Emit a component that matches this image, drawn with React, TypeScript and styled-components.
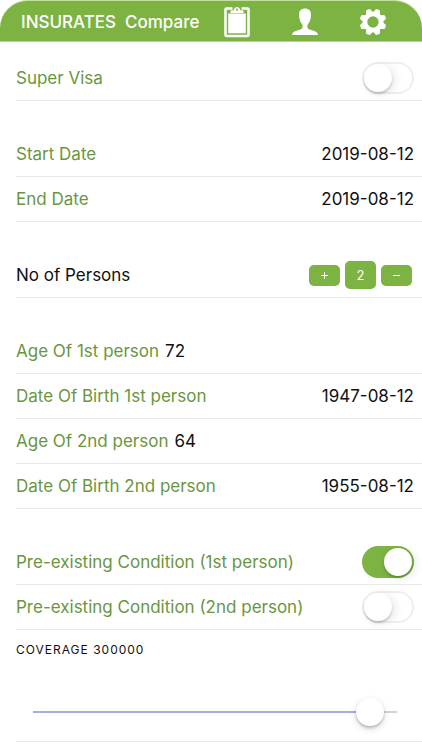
import React, { useState } from "react";
import styled, { createGlobalStyle } from "styled-components";

const green = "#7cb342";

const GlobalStyle = createGlobalStyle`
  *, *::before, *::after { box-sizing: border-box; }
  body { margin: 0; background: #fff; }
  body, button, input { font-family: Inter, "Liberation Sans", sans-serif; }
`;

const Page = styled.div`
  min-height: 100vh;
  background: #fff;
  color: #111;
  font-size: 17px;
  line-height: 24px;
`;

const Header = styled.header`
  display: flex;
  align-items: center;
  height: 42px;
  padding: 2px 15px 0 21px;
  background: ${green};
  border-top: 1px solid #c3e09c;
  border-bottom: 1px solid #b5d68a;
  border-radius: 28px 28px 0 0;
  color: #fff;
`;

const Brand = styled.h1`
  margin: 0;
  font-size: 17px;
  font-weight: 500;
`;

const CompareLink = styled.a`
  margin-left: 9px;
  color: #fff;
  font-size: 17px;
  font-weight: 500;
  text-decoration: none;
`;

const Nav = styled.nav`
  display: flex;
  flex: 1;
  margin-left: 3px;
`;

const NavButton = styled.button`
  display: flex;
  flex: 1;
  justify-content: center;
  padding: 0;
  border: 0;
  background: none;
  color: #fff;
  cursor: pointer;
`;

const Form = styled.main`
  display: flex;
  flex-direction: column;
  gap: 31px;
  padding: 14px 0 8px 16px;
`;

const Group = styled.section`
  display: flex;
  flex-direction: column;
`;

const Row = styled.div`
  display: flex;
  align-items: center;
  height: 45px;
  padding-right: 8px;
  border-bottom: 1px solid #e9e9eb;
`;

const Label = styled.label<{ $dark?: boolean }>`
  color: ${(p) => (p.$dark ? "#111" : "#6a963f")};
  white-space: nowrap;
`;

const ValueInput = styled.input<{ $end?: boolean }>`
  flex: 1;
  min-width: 0;
  margin-left: 6px;
  padding: 0;
  border: 0;
  outline: 0;
  background: transparent;
  color: #111;
  font-size: 17px;
  line-height: 24px;
  text-align: ${(p) => (p.$end ? "right" : "left")};
`;

const Switch = styled.input`
  appearance: none;
  flex: none;
  display: flex;
  align-items: center;
  width: 52px;
  height: 32px;
  margin: 0 0 0 auto;
  padding: 0 2px;
  border-radius: 16px;
  background: #fff;
  box-shadow: inset 0 0 0 2px #efefef;
  cursor: pointer;

  &::before {
    content: "";
    width: 28px;
    height: 28px;
    border-radius: 50%;
    background: #fff;
    box-shadow: 0 2px 2px rgba(0, 0, 0, 0.18), 3px 2px 10px rgba(0, 0, 0, 0.1);
  }

  &:checked {
    justify-content: flex-end;
    background: ${green};
    box-shadow: none;
  }
`;

const Stepper = styled.div`
  display: flex;
  align-items: center;
  gap: 5px;
  margin-left: auto;
  padding-right: 2px;
`;

const StepButton = styled.button`
  display: flex;
  align-items: center;
  justify-content: center;
  width: 31px;
  height: 21px;
  padding: 0;
  border: 0;
  border-radius: 5px;
  background: ${green};
  color: #fff;
  cursor: pointer;
`;

const StepValue = styled.output`
  width: 31px;
  border-radius: 5px;
  background: ${green};
  color: #fff;
  font-size: 13px;
  line-height: 28px;
  text-align: center;
`;

const CoverageRow = styled.div`
  display: flex;
  flex-direction: column;
  gap: 37px;
  padding: 10px 25px 14px 0;
  border-bottom: 1px solid #e9e9eb;
`;

const CoverageLabel = styled.label`
  color: #111;
  font-size: 12px;
  line-height: 20px;
  letter-spacing: 1px;
  text-transform: uppercase;
`;

const Slider = styled.input`
  appearance: none;
  height: 30px;
  margin: 0 0 0 17px;
  background: linear-gradient(#9ab3e0, #9ab3e0) left center / var(--fill) 2px no-repeat,
    linear-gradient(#d3d3d6, #d3d3d6) center / 100% 2px no-repeat;
  cursor: pointer;

  &::-webkit-slider-thumb {
    appearance: none;
    width: 28px;
    height: 28px;
    border-radius: 50%;
    background: #fff;
    box-shadow: 0 2px 3px rgba(0, 0, 0, 0.22), 0 3px 8px rgba(0, 0, 0, 0.12);
  }
`;

const ClipboardIcon = () => (
  <svg width="26" height="32" viewBox="0 0 26 32" aria-hidden="true">
    <path
      fill="none"
      stroke="currentColor"
      strokeWidth="2.600"
      strokeLinejoin="round"
      d="M8.500 2.500H2.500a1 1 0 0 0-1 1V29a1 1 0 0 0 1 1h21a1 1 0 0 0 1-1V3.500a1 1 0 0 0-1-1H17.500"
    />
    <rect x="4.200" y="7.400" width="17.600" height="19.800" rx="0.500" fill="currentColor" />
    <path
      fill="currentColor"
      fillRule="evenodd"
      d="M6.500 7V5.500c0-.8.500-1.300 1.300-1.300H9.800C10.200 2 11.400 1 13 1s2.800 1 3.200 3.200h2c.8 0 1.300.5 1.300 1.300V7ZM13 2.600a1.100 1.100 0 1 0 0 2.200a1.100 1.100 0 0 0 0-2.200Z"
    />
  </svg>
);

const PersonIcon = () => (
  <svg width="28" height="32" viewBox="0 0 28 32" aria-hidden="true">
    <path fill="currentColor" d="M14 2.500c-3.800 0-6 2.300-6 6 0 3.700 1 7.300 3 9.600.7 1 .9 3.200.2 4.200-.8 1.100-2.600 1.500-5 2.200C3 25.400 1.500 26.300 1 29h26c-.5-2.700-2-3.600-5.200-4.500-2.400-.7-4.200-1.100-5-2.200-.7-1-.5-3.200.2-4.200 2-2.300 3-5.900 3-9.600 0-3.700-2.200-6-6-6Z" />
  </svg>
);

const GearIcon = () => (
  <svg width="28" height="32" viewBox="-14 -16 28 32" aria-hidden="true">
    <circle r="8" fill="none" stroke="currentColor" strokeWidth="4.600" />
    {[22.5, 67.5, 112.5, 157.5, 202.5, 247.5, 292.5, 337.5].map((angle) => (
      <path
        key={angle}
        fill="currentColor"
        transform={`rotate(${angle})`}
        d="M-4-9Q-2.900-10.200-2.600-12-2.400-13.400-1.200-13.400H1.200Q2.400-13.400 2.600-12 2.900-10.200 4-9Z"
      />
    ))}
  </svg>
);

const SignIcon = ({ plus }: { plus?: boolean }) => (
  <svg width="9" height="9" viewBox="0 0 9 9" aria-hidden="true">
    <path stroke="currentColor" d={plus ? "M1 4.500H8M4.500 1V8" : "M1 4.500H8"} />
  </svg>
);

function ValueRow({ id, label, value, end }: { id: string; label: string; value: string; end?: boolean }) {
  const [text, setText] = useState(value);
  return (
    <Row>
      <Label htmlFor={id}>{label}</Label>
      <ValueInput id={id} $end={end} value={text} onChange={(e) => setText(e.target.value)} />
    </Row>
  );
}

function SwitchRow({ id, label, on }: { id: string; label: string; on?: boolean }) {
  return (
    <Row>
      <Label htmlFor={id}>{label}</Label>
      <Switch id={id} type="checkbox" defaultChecked={on} />
    </Row>
  );
}

export default function App() {
  const [persons, setPersons] = useState(2);
  const [coverage, setCoverage] = useState(300000);
  const maxCoverage = 312500;
  const ratio = coverage / maxCoverage;

  return (
    <Page>
      <GlobalStyle />
      <Header>
        <Brand>INSURATES</Brand>
        <CompareLink href="#compare">Compare</CompareLink>
        <Nav>
          <NavButton aria-label="Quotes"><ClipboardIcon /></NavButton>
          <NavButton aria-label="Profile"><PersonIcon /></NavButton>
          <NavButton aria-label="Settings"><GearIcon /></NavButton>
        </Nav>
      </Header>
      <Form>
        <Group>
          <SwitchRow id="super-visa" label="Super Visa" />
        </Group>
        <Group>
          <ValueRow id="start" label="Start Date" value="2019-08-12" end />
          <ValueRow id="end" label="End Date" value="2019-08-12" end />
        </Group>
        <Group>
          <Row>
            <Label $dark htmlFor="persons">No of Persons</Label>
            <Stepper>
              <StepButton aria-label="Add person" onClick={() => setPersons(persons + 1)}><SignIcon plus /></StepButton>
              <StepValue id="persons">{persons}</StepValue>
              <StepButton aria-label="Remove person" onClick={() => setPersons(Math.max(1, persons - 1))}><SignIcon /></StepButton>
            </Stepper>
          </Row>
        </Group>
        <Group>
          <ValueRow id="age-1" label="Age Of 1st person" value="72" />
          <ValueRow id="birth-1" label="Date Of Birth 1st person" value="1947-08-12" end />
          <ValueRow id="age-2" label="Age Of 2nd person" value="64" />
          <ValueRow id="birth-2" label="Date Of Birth 2nd person" value="1955-08-12" end />
        </Group>
        <Group>
          <SwitchRow id="condition-1" label="Pre-existing Condition (1st person)" on />
          <SwitchRow id="condition-2" label="Pre-existing Condition (2nd person)" />
          <CoverageRow>
            <CoverageLabel htmlFor="coverage">Coverage {coverage}</CoverageLabel>
            <Slider
              id="coverage"
              type="range"
              min={0}
              max={maxCoverage}
              step={12500}
              value={coverage}
              onChange={(e) => setCoverage(Number(e.target.value))}
              style={{ "--fill": `calc(14px + (100% - 28px) * ${ratio})` } as React.CSSProperties}
            />
          </CoverageRow>
        </Group>
      </Form>
    </Page>
  );
}
